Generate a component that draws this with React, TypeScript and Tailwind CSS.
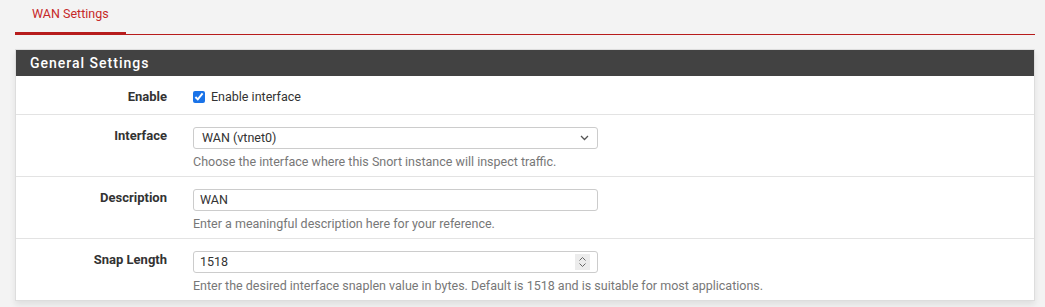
import React from 'react'

function Row({ label, children, help }: { label: string; children: React.ReactNode; help?: string }) {
  return (
    <div className="flex border-t border-[#e3e3e3]">
      <div className="w-[151px] shrink-0 text-right font-bold text-[13px] text-[#333] pt-[11px]">{label}</div>
      <div className="pl-[26px] pt-[12px] pb-[6px]">
        {children}
        {help && <div className="text-[12.5px] text-[#777] mt-[5px] leading-[16px] whitespace-nowrap">{help}</div>}
      </div>
    </div>
  )
}

function App() {
  return (
    <div className="w-[1045px] h-[307px] bg-[#f3f3f3] pl-[15px] pr-[10px] overflow-hidden" style={{ fontFamily: 'Roboto, "Liberation Sans", sans-serif' }}>
      <div className="flex h-[35px] border-b border-[#b71c1c]">
        <div className="w-[111px] -mb-px border-b-[3px] border-[#b71c1c] text-[#c62828] text-[12.5px] pl-[17px] pt-[5px]">WAN Settings</div>
      </div>

      <div className="mt-[14px] bg-white border border-[#ddd] shadow-[0_4px_6px_rgba(0,0,0,0.08)]">
        <div className="bg-[#424242] text-white text-[14px] font-medium tracking-[1px] h-[26px] leading-[26px] pl-[14px]">General Settings</div>

        <div className="flex h-[38px] items-center pt-[4px]">
          <div className="w-[151px] shrink-0 text-right font-bold text-[13px] text-[#333]">Enable</div>
          <label className="pl-[26px] flex items-center gap-[6px] text-[12.5px] text-[#333]">
            <input type="checkbox" checked readOnly className="w-[12px] h-[12px] m-0 accent-[#1a73e8]" />
            Enable interface
          </label>
        </div>

        <Row label="Interface" help="Choose the interface where this Snort instance will inspect traffic.">
          <div className="w-[405px] h-[22px] border border-[#ccc] rounded-[3px] flex items-center justify-between pl-[8px] pr-[8px] text-[12.5px] text-[#333]">
            <span>WAN (vtnet0)</span>
            <svg width="9" height="6" viewBox="0 0 9 6" fill="none" stroke="#555" strokeWidth="1.3"><path d="M1 1l3.5 3.5L8 1" /></svg>
          </div>
        </Row>

        <Row label="Description" help="Enter a meaningful description here for your reference.">
          <div className="w-[405px] h-[22px] border border-[#ccc] rounded-[3px] flex items-center pl-[6px] text-[12.5px] text-[#333]">WAN</div>
        </Row>

        <Row label="Snap Length" help="Enter the desired interface snaplen value in bytes. Default is 1518 and is suitable for most applications.">
          <div className="relative w-[405px] h-[22px] border border-[#ccc] rounded-[3px] flex items-center pl-[6px] text-[12.5px] text-[#333]">
            1518
            <span className="absolute right-[7px] top-[2px] w-[15px] h-[16px] bg-[#ececec] flex flex-col items-center justify-center gap-[2px]">
              <svg width="7" height="4" viewBox="0 0 7 4" fill="none" stroke="#666" strokeWidth="1"><path d="M0.5 3.5L3.5 0.5L6.5 3.5" /></svg>
              <svg width="7" height="4" viewBox="0 0 7 4" fill="none" stroke="#666" strokeWidth="1"><path d="M0.5 0.5L3.5 3.5L6.5 0.5" /></svg>
            </span>
          </div>
        </Row>
      </div>
    </div>
  )
}

export default App
